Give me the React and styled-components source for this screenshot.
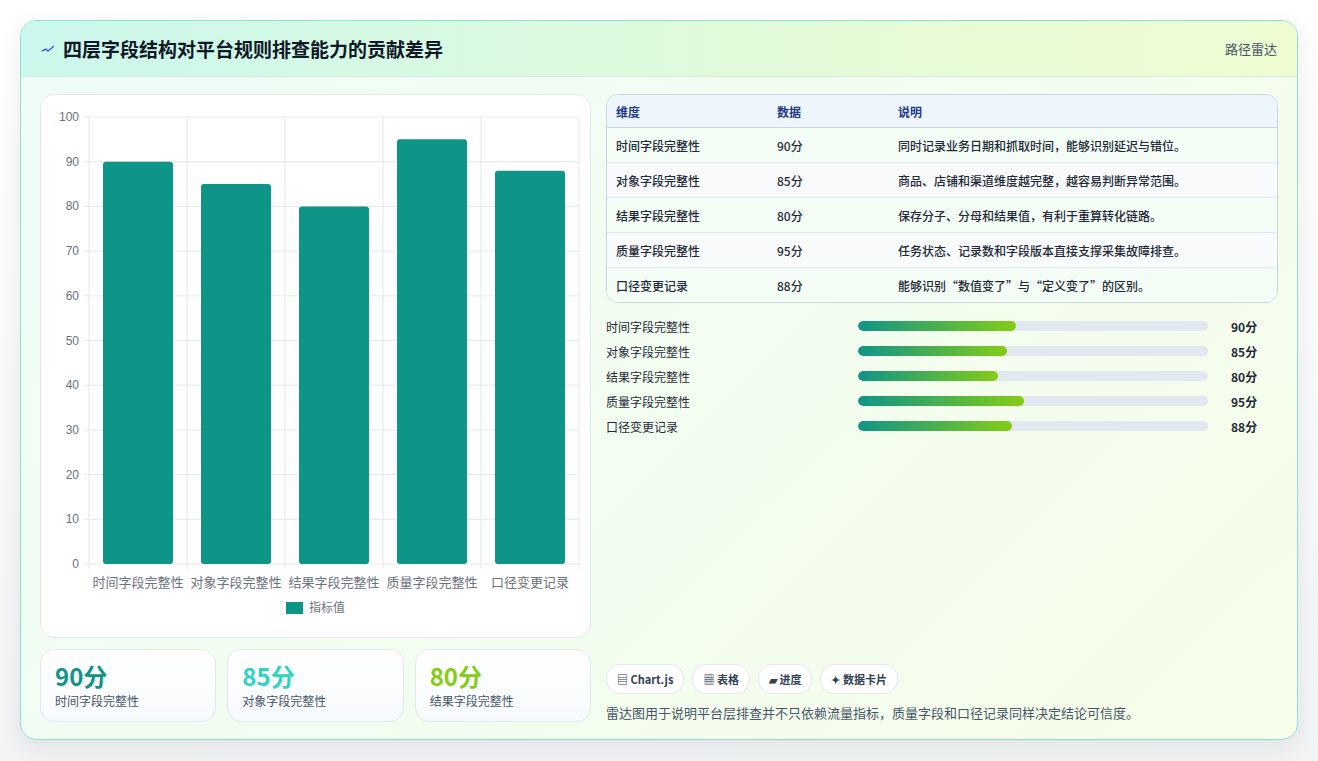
import React from "react";
import styled, { createGlobalStyle } from "styled-components";

const Global = createGlobalStyle`
  body {
    margin: 0;
    background: linear-gradient(#ffffff, #f2f3f5);
    font-family: "Noto Sans CJK SC", "Noto Sans", sans-serif;
  }
`;

const Page = styled.div`
  padding: 20px 20px 21px 20px;
  height: 761px;
  box-sizing: border-box;
`;

const Card = styled.div`
  height: 720px;
  box-sizing: border-box;
  border: 1px solid #8ee0d2;
  border-radius: 16px;
  background: linear-gradient(135deg, #effdf8, #f6fde8);
  box-shadow: 0 8px 24px rgba(15, 23, 42, 0.08);
  overflow: hidden;
  display: flex;
  flex-direction: column;
`;

const Header = styled.div`
  height: 55px;
  flex: none;
  display: flex;
  align-items: center;
  justify-content: space-between;
  padding: 0 20px;
  background: linear-gradient(90deg, #cbf7ec, #e6fbd6 70%, #effcd2);
  border-bottom: 1px solid #d6efe6;
`;

const Title = styled.h1`
  margin: 0;
  font-size: 19px;
  font-weight: 700;
  color: #111827;
  display: flex;
  align-items: center;
  gap: 8px;
`;

const Tag = styled.span`
  font-size: 13px;
  color: #475569;
`;

const Body = styled.div`
  flex: 1;
  display: grid;
  grid-template-columns: 551px 1fr;
  gap: 15px;
  padding: 17px 19px 18px 19px;
`;

const Col = styled.div`
  display: flex;
  flex-direction: column;
  gap: 11px;
  min-height: 0;
`;

const ChartCard = styled.div`
  height: 544px;
  box-sizing: border-box;
  background: #fff;
  border: 1px solid #e2e8f0;
  border-radius: 14px;
`;

const Stats = styled.div`
  display: grid;
  grid-template-columns: repeat(3, 1fr);
  gap: 11px;
`;

const Stat = styled.div`
  height: 73px;
  box-sizing: border-box;
  background: linear-gradient(180deg, #ffffff, #f7fafd);
  border: 1px solid #e2e8f0;
  border-radius: 14px;
  padding: 10px 14px;
`;

const StatValue = styled.div`
  font-size: 24px;
  font-weight: 700;
  line-height: 32px;
  color: ${(p) => p.$color};
`;

const StatLabel = styled.div`
  font-size: 12px;
  color: #475569;
`;

const Table = styled.table`
  width: 100%;
  border-collapse: separate;
  border-spacing: 0;
  border: 1px solid #cbd5e1;
  border-radius: 12px;
  overflow: hidden;
  font-size: 12px;
  background: #fff;
`;

const Th = styled.th`
  text-align: left;
  font-weight: 700;
  color: #1e3a8a;
  background: #eef6fd;
  height: 32px;
  padding: 0 9px;
  border-bottom: 1px solid #cbd5e1;
`;

const Td = styled.td`
  height: 34px;
  padding: 0 9px;
  color: #1f2937;
  font-weight: 500;
  border-bottom: ${(p) => (p.$last ? "none" : "1px solid #e2e8f0")};
`;

const Tr = styled.tr`
  background: ${(p) => (p.$odd ? "#f8fafc" : "#f3fdf6")};
`;

const Bars = styled.div`
  display: flex;
  flex-direction: column;
  gap: 7px;
  margin-top: 3px;
`;

const BarRow = styled.div`
  display: grid;
  grid-template-columns: 252px 350px 1fr;
  gap: 0;
  align-items: center;
  font-size: 12px;
  color: #1f2937;
  height: 18px;
  & > b:last-child { padding-left: 23px; }
`;

const Track = styled.div`
  height: 10px;
  border-radius: 5px;
  background: #e2e8f0;
  overflow: hidden;
`;

const Fill = styled.div`
  height: 100%;
  border-radius: 5px;
  background: linear-gradient(90deg, #0f9488, #84cc16);
`;

const Spacer = styled.div`
  flex: 1;
`;

const Chips = styled.div`
  display: flex;
  gap: 8px;
`;

const Chip = styled.span`
  height: 28px;
  padding: 0 10px;
  display: flex;
  align-items: center;
  gap: 4px;
  border: 1px solid #e2e8f0;
  border-radius: 14px;
  background: #fff;
  font-size: 11px;
  font-weight: 700;
  color: #334155;
`;

const Note = styled.p`
  margin: 9px 0 0;
  font-size: 13px;
  color: #475569;
`;

const data = [
  { name: "时间字段完整性", v: 90, d: "同时记录业务日期和抓取时间，能够识别延迟与错位。" },
  { name: "对象字段完整性", v: 85, d: "商品、店铺和渠道维度越完整，越容易判断异常范围。" },
  { name: "结果字段完整性", v: 80, d: "保存分子、分母和结果值，有利于重算转化链路。" },
  { name: "质量字段完整性", v: 95, d: "任务状态、记录数和字段版本直接支撑采集故障排查。" },
  { name: "口径变更记录", v: 88, d: "能够识别“数值变了”与“定义变了”的区别。" },
];

function BarChart() {
  const x0 = 48, x1 = 538, y0 = 22, y1 = 469;
  const cw = (x1 - x0) / 5;
  const ticks = [0, 10, 20, 30, 40, 50, 60, 70, 80, 90, 100];
  const y = (v) => y1 - ((y1 - y0) * v) / 100;
  return (
    <svg width="549" height="542" fontFamily="'Liberation Sans', Arial, sans-serif">
      {ticks.map((t) => (
        <g key={t}>
          <line x1={x0 - 5} x2={x1} y1={y(t)} y2={y(t)} stroke="#e5e7eb" />
          <text x={x0 - 10} y={y(t) + 4} fontSize="12" fill="#6b7280" textAnchor="end">{t}</text>
        </g>
      ))}
      {[0, 1, 2, 3, 4, 5].map((i) => (
        <line key={i} x1={x0 + i * cw} x2={x0 + i * cw} y1={y0} y2={y1 + 5} stroke="#e5e7eb" />
      ))}
      {data.map((r, i) => (
        <g key={r.name}>
          <rect x={x0 + i * cw + 14} y={y(r.v)} width={cw - 28} height={y1 - y(r.v)} rx="3" fill="#0f9488" />
          <text x={x0 + i * cw + cw / 2} y={y1 + 23} fontSize="13" fill="#6b7280" textAnchor="middle"
            fontFamily="'Noto Sans CJK SC', sans-serif">{r.name}</text>
        </g>
      ))}
      <rect x="245" y="507" width="17" height="12" fill="#0f9488" />
      <text x="268" y="517" fontSize="12" fill="#6b7280" fontFamily="'Noto Sans CJK SC', sans-serif">指标值</text>
    </svg>
  );
}

export default function App() {
  const colors = ["#0f9488", "#2dd4bf", "#84cc16"];
  return (
    <Page>
      <Global />
      <Card>
        <Header>
          <Title>
            <svg width="14" height="10" viewBox="0 0 14 10"><path d="M1 7 L5 5 L7 7 L13 2" stroke="#3b5bdb" strokeWidth="1.4" fill="none" /></svg>
            四层字段结构对平台规则排查能力的贡献差异
          </Title>
          <Tag>路径雷达</Tag>
        </Header>
        <Body>
          <Col>
            <ChartCard><BarChart /></ChartCard>
            <Stats>
              {data.slice(0, 3).map((r, i) => (
                <Stat key={r.name}>
                  <StatValue $color={colors[i]}>{r.v}分</StatValue>
                  <StatLabel>{r.name}</StatLabel>
                </Stat>
              ))}
            </Stats>
          </Col>
          <Col>
            <Table>
              <thead>
                <tr><Th style={{ width: 143 }}>维度</Th><Th style={{ width: 103 }}>数据</Th><Th>说明</Th></tr>
              </thead>
              <tbody>
                {data.map((r, i) => (
                  <Tr key={r.name} $odd={i % 2 === 1}>
                    <Td $last={i === 4}>{r.name}</Td>
                    <Td $last={i === 4}>{r.v}分</Td>
                    <Td $last={i === 4}>{r.d}</Td>
                  </Tr>
                ))}
              </tbody>
            </Table>
            <Bars>
              {data.map((r) => (
                <BarRow key={r.name}>
                  <span>{r.name}</span>
                  <Track><Fill style={{ width: `${r.v / 2}%` }} /></Track>
                  <b>{r.v}分</b>
                </BarRow>
              ))}
            </Bars>
            <Spacer />
            <div>
              <Chips>
                <Chip>▤ Chart.js</Chip>
                <Chip>▦ 表格</Chip>
                <Chip>▰ 进度</Chip>
                <Chip>✦ 数据卡片</Chip>
              </Chips>
              <Note>雷达图用于说明平台层排查并不只依赖流量指标，质量字段和口径记录同样决定结论可信度。</Note>
            </div>
          </Col>
        </Body>
      </Card>
    </Page>
  );
}
